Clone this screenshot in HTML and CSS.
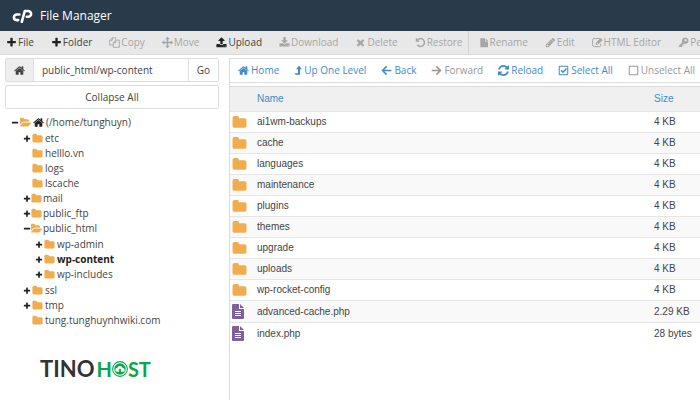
FILE: index.html
```html
<!DOCTYPE html>
<html lang="en">
<head>
<meta charset="UTF-8">
<meta name="viewport" content="width=device-width, initial-scale=1.0">
<title>File Manager</title>
<link rel="stylesheet" href="styles.css">
</head>
<body>
<!-- Icon set -->
<svg class="sprite" aria-hidden="true">
  <symbol id="plus" viewBox="0 0 1792 1792"><path d="M1600 736v192q0 40-28 68t-68 28h-416v416q0 40-28 68t-68 28h-192q-40 0-68-28t-28-68v-416h-416q-40 0-68-28t-28-68v-192q0-40 28-68t68-28h416v-416q0-40 28-68t68-28h192q40 0 68 28t28 68v416h416q40 0 68 28t28 68z"/></symbol>
  <symbol id="minus" viewBox="0 0 1792 1792"><path d="M1600 736v192q0 40-28 68t-68 28h-1216q-40 0-68-28t-28-68v-192q0-40 28-68t68-28h1216q40 0 68 28t28 68z"/></symbol>
  <symbol id="folder" viewBox="0 0 1792 1792"><path d="M1728 608v704q0 92-66 158t-158 66h-1216q-92 0-158-66t-66-158v-960q0-92 66-158t158-66h320q92 0 158 66t66 158v32h672q92 0 158 66t66 158z"/></symbol>
  <symbol id="folder-open" viewBox="0 0 1792 1792"><path d="M1815 952q0 31-31 66l-336 396q-43 51-120.5 86.5t-143.5 35.5h-1088q-34 0-60.5-13t-26.5-43q0-31 31-66l336-396q43-51 120.5-86.5t143.5-35.5h1088q34 0 60.5 13t26.5 43zm-343-344v160h-832q-94 0-197 47.5t-164 119.5l-337 396-5 6q0-4-.5-12.5t-.5-12.5v-960q0-92 66-158t158-66h320q92 0 158 66t66 158v32h544q92 0 158 66t66 158z"/></symbol>
  <symbol id="home" viewBox="64 64 1664 1664"><path d="M1472 992v480q0 26-19 45t-45 19h-384v-384h-256v384h-384q-26 0-45-19t-19-45v-480q0-1 .5-3t.5-3l575-474 575 474q1 2 1 6zm223-69l-62 74q-8 9-21 11h-3q-13 0-21-7l-692-577-692 577q-12 8-24 7-13-2-21-11l-62-74q-8-10-7-23.5t11-21.5l719-599q32-26 76-26t76 26l244 204v-195q0-14 9-23t23-9h192q14 0 23 9t9 23v408l219 182q10 8 11 21.5t-7 23.5z"/></symbol>
  <symbol id="copy" viewBox="0 0 16 16"><path fill="none" stroke="currentColor" stroke-width="1.3" stroke-linejoin="round" d="M9.5 3.8V1H4.8L1 4.8v6.7h5.2M4.8 1v3.8H1M10 4.5h5V15H6.2V8.2zM10 4.5v3.7H6.2"/></symbol>
  <symbol id="move" viewBox="0 0 1792 1792"><path d="M1792 896q0 26-19 45l-256 256q-19 19-45 19t-45-19-19-45v-128h-384v384h128q26 0 45 19t19 45-19 45l-256 256q-19 19-45 19t-45-19l-256-256q-19-19-19-45t19-45 45-19h128v-384h-384v128q0 26-19 45t-45 19-45-19l-256-256q-19-19-19-45t19-45l256-256q19-19 45-19t45 19 19 45v128h384v-384h-128q-26 0-45-19t-19-45 19-45l256-256q19-19 45-19t45 19l256 256q19 19 19 45t-19 45-45 19h-128v384h384v-128q0-26 19-45t45-19 45 19l256 256q19 19 19 45z"/></symbol>
  <symbol id="upload" viewBox="0 0 1792 1792"><path d="M1344 1472q0-26-19-45t-45-19-45 19-19 45 19 45 45 19 45-19 19-45zm256 0q0-26-19-45t-45-19-45 19-19 45 19 45 45 19 45-19 19-45zm128-224v320q0 40-28 68t-68 28h-1472q-40 0-68-28t-28-68v-320q0-40 28-68t68-28h427q21 56 70.5 92t110.5 36h256q61 0 110.5-36t70.5-92h427q40 0 68 28t28 68zm-325-648q-17 40-59 40h-256v448q0 26-19 45t-45 19h-256q-26 0-45-19t-19-45v-448h-256q-42 0-59-40-17-39 14-69l448-448q18-19 45-19t45 19l448 448q31 30 14 69z"/></symbol>
  <symbol id="download" viewBox="0 0 1792 1792"><path d="M1344 1344q0-26-19-45t-45-19-45 19-19 45 19 45 45 19 45-19 19-45zm256 0q0-26-19-45t-45-19-45 19-19 45 19 45 45 19 45-19 19-45zm128-224v320q0 40-28 68t-68 28h-1472q-40 0-68-28t-28-68v-320q0-40 28-68t68-28h465l135 136q58 56 136 56t136-56l136-136h464q40 0 68 28t28 68zm-325-569q17 41-14 70l-448 448q-18 19-45 19t-45-19l-448-448q-31-29-14-70 17-39 59-39h256v-448q0-26 19-45t45-19h256q26 0 45 19t19 45v448h256q42 0 59 39z"/></symbol>
  <symbol id="times" viewBox="0 0 1792 1792"><path d="M1490 1322q0 40-28 68l-136 136q-28 28-68 28t-68-28l-294-294-294 294q-28 28-68 28t-68-28l-136-136q-28-28-28-68t28-68l294-294-294-294q-28-28-28-68t28-68l136-136q28-28 68-28t68 28l294 294 294-294q28-28 68-28t68 28l136 136q28 28 28 68t-28 68l-294 294 294 294q28 28 28 68z"/></symbol>
  <symbol id="undo" viewBox="0 0 1792 1792"><path d="M1664 896q0 156-61 298t-164 245-245 164-298 61q-172 0-327-72.5t-264-204.5q-7-10-6.5-22.5t8.5-20.5l137-138q10-9 25-9 16 2 23 12 73 95 179 147t225 52q104 0 198.5-40.5t163.5-109.5 109.5-163.5 40.5-198.5-40.5-198.5-109.5-163.5-163.5-109.5-198.5-40.5q-98 0-188 35.5t-160 101.5l137 138q31 30 14 69-17 40-59 40h-448q-26 0-45-19t-19-45v-448q0-42 40-59 39-17 69 14l130 129q107-101 244.5-156.5t284.5-55.5q156 0 298 61t245 164 164 245 61 298z"/></symbol>
  <symbol id="file" viewBox="0 -128 1600 1920"><path d="M1152 512v-472q22 14 36 28l408 408q14 14 28 36h-472zm-128 32q0 40 28 68t68 28h480v1056q0 40-28 68t-68 28h-1344q-40 0-68-28t-28-68v-1600q0-40 28-68t68-28h864v544z"/></symbol>
  <symbol id="pencil" viewBox="0 0 1792 1792"><path d="M491 1536l91-91-235-235-91 91v107h128v128h107zm523-928q0-22-22-22-10 0-17 7l-542 542q-7 7-7 17 0 22 22 22 10 0 17-7l542-542q7-7 7-17zm-54-192l416 416-832 832h-416v-416zm683 96q0 53-37 90l-166 166-416-416 166-165q36-38 90-38 53 0 91 38l235 234q37 39 37 91z"/></symbol>
  <symbol id="edit" viewBox="0 0 16 16"><path fill="none" stroke="currentColor" stroke-width="1.4" d="M11.5 2.2H3Q1 2.2 1 4.2v7.6Q1 14 3 14h7.8q2 0 2-2V9.8"/><path d="M5.6 11.2V8.3l7-7 2.9 2.9-7 7zM7 8.8v1h1.2v.7l.8-.8L7.7 8.2z" fill-rule="evenodd"/></symbol>
  <symbol id="key" viewBox="0 0 16 16"><path fill-rule="evenodd" d="M10.4.8a4.6 4.6 0 1 1-2 8.6L7 10.8l1.3 1.3-1.1 1.1-1.3-1.3-.7.7 1.2 1.2-1.2 1.2-1.1-1.3L2.6 15 .8 13.2l5.5-5.7A4.6 4.6 0 0 1 10.4.8zM11 2.9a1.7 1.7 0 1 0 .1 0z"/></symbol>
  <symbol id="level-up" viewBox="1 0 12 16"><path d="M8.5 1 13 6H10V14.5H3.5L1.500 12H7V6H4z"/></symbol>
  <symbol id="arrow-left" viewBox="0 0 16 16"><path fill="none" stroke="currentColor" stroke-width="2.2" d="M15 8H2.5M8.2 2 2.2 8l6 6"/></symbol>
  <symbol id="arrow-right" viewBox="0 0 16 16"><path fill="none" stroke="currentColor" stroke-width="2.2" d="M1 8h12.500M7.800 2l6 6-6 6"/></symbol>
  <symbol id="refresh" viewBox="128 128 1536 1536"><path d="M1639 1056q0 5-1 7-64 268-268 434.500t-478 166.500q-146 0-282.500-55t-243.500-157l-129 129q-19 19-45 19t-45-19-19-45v-448q0-26 19-45t45-19h448q26 0 45 19t19 45-19 45l-137 137q71 66 161 102t187 36q134 0 250-65t186-179q11-17 53-117 8-23 30-23h192q13 0 22.500 9.500t9.500 22.500zm25-800v448q0 26-19 45t-45 19h-448q-26 0-45-19t-19-45 19-45l138-138q-148-137-349-137-134 0-250 65t-186 179q-11 17-53 117-8 23-30 23h-199q-13 0-22.500-9.500t-9.500-22.500v-7q65-268 270-434.500t480-166.500q146 0 284 55.500t245 156.500l130-129q19-19 45-19t45 19 19 45z"/></symbol>
  <symbol id="check" viewBox="0 0 16 16"><rect x="1.8" y="1.8" width="12.4" height="12.4" rx="1" fill="none" stroke="currentColor" stroke-width="1.5"/><path fill="none" stroke="currentColor" stroke-width="2" d="m4.3 7.5 3 3 5-5.5"/></symbol>
  <symbol id="square" viewBox="0 0 16 16"><rect x="1.8" y="1.8" width="12.4" height="12.4" rx="1" fill="none" stroke="currentColor" stroke-width="1.5"/></symbol>
  <symbol id="doc" viewBox="0 0 12 15"><path fill="#7f609c" d="M1 0h6v5h5v9q0 1-1 1H1q-1 0-1-1V1q0-1 1-1zM8 0l4 4H8z"/><path fill="#fff" d="M3 7h6v1H3zM3 9h6v1H3zM3 11h6v1H3z"/></symbol>
</svg>

<header class="header">
  <svg class="cp-logo" viewBox="0 0 21 14" aria-hidden="true">
    <path d="M7.400 5.500H4.700a2.800 2.800 0 0 0 0 5.600h1.500M9.800 12.900l3-10.900h3.400a2.900 2.900 0 0 1 0 5.800h-1.400"/>
  </svg>
  <h1 class="title">File Manager</h1>
</header>

<div class="toolbar">
  <button class="tool"><svg class="icon"><use href="#plus"/></svg>File</button>
  <button class="tool"><svg class="icon"><use href="#plus"/></svg>Folder</button>
  <button class="tool" disabled><svg class="icon"><use href="#copy"/></svg>Copy</button>
  <button class="tool" disabled><svg class="icon"><use href="#move"/></svg>Move</button>
  <button class="tool"><svg class="icon"><use href="#upload"/></svg>Upload</button>
  <button class="tool" disabled><svg class="icon"><use href="#download"/></svg>Download</button>
  <button class="tool" disabled><svg class="icon"><use href="#times"/></svg>Delete</button>
  <button class="tool" disabled><svg class="icon"><use href="#undo"/></svg>Restore</button>
  <span class="divider"></span>
  <button class="tool" disabled><svg class="icon narrow"><use href="#file"/></svg>Rename</button>
  <button class="tool" disabled><svg class="icon"><use href="#pencil"/></svg>Edit</button>
  <button class="tool" disabled><svg class="icon"><use href="#edit"/></svg>HTML Editor</button>
  <button class="tool" disabled><svg class="icon"><use href="#key"/></svg>Permissions</button>
</div>

<div class="main">
  <aside class="sidebar">
    <form class="location">
      <button class="addon" type="button" aria-label="Home"><svg class="icon"><use href="#home"/></svg></button>
      <input class="path" type="text" aria-label="Path" value="public_html/wp-content">
      <button class="go" type="button">Go</button>
    </form>
    <button class="collapse">Collapse All</button>

    <ul class="tree">
      <li>
        <div class="node"><svg class="toggle"><use href="#minus"/></svg><svg class="icon gold"><use href="#folder-open"/></svg><svg class="icon"><use href="#home"/></svg>(/home/tunghuyn)</div>
        <ul>
          <li class="node"><svg class="toggle"><use href="#plus"/></svg><svg class="icon gold"><use href="#folder"/></svg>etc</li>
          <li class="node"><span class="toggle"></span><svg class="icon gold"><use href="#folder"/></svg>helllo.vn</li>
          <li class="node"><span class="toggle"></span><svg class="icon gold"><use href="#folder"/></svg>logs</li>
          <li class="node"><span class="toggle"></span><svg class="icon gold"><use href="#folder"/></svg>lscache</li>
          <li class="node tight"><svg class="toggle"><use href="#plus"/></svg><svg class="icon gold"><use href="#folder"/></svg>mail</li>
          <li class="node tight"><svg class="toggle"><use href="#plus"/></svg><svg class="icon gold"><use href="#folder"/></svg>public_ftp</li>
          <li>
            <div class="node tight"><svg class="toggle"><use href="#minus"/></svg><svg class="icon gold"><use href="#folder-open"/></svg>public_html</div>
            <ul>
              <li class="node"><svg class="toggle"><use href="#plus"/></svg><svg class="icon gold"><use href="#folder"/></svg>wp-admin</li>
              <li class="node current"><svg class="toggle"><use href="#plus"/></svg><svg class="icon gold"><use href="#folder"/></svg>wp-content</li>
              <li class="node"><svg class="toggle"><use href="#plus"/></svg><svg class="icon gold"><use href="#folder"/></svg>wp-includes</li>
            </ul>
          </li>
          <li class="node"><svg class="toggle"><use href="#plus"/></svg><svg class="icon gold"><use href="#folder"/></svg>ssl</li>
          <li class="node"><svg class="toggle"><use href="#plus"/></svg><svg class="icon gold"><use href="#folder"/></svg>tmp</li>
          <li class="node"><span class="toggle"></span><svg class="icon gold"><use href="#folder"/></svg>tung.tunghuynhwiki.com</li>
        </ul>
      </li>
    </ul>

    <div class="brand">
      <span class="brand-dark">TINO</span>
      <span class="brand-green">H<svg class="brand-o" viewBox="0 0 18 18" aria-hidden="true"><circle cx="9" cy="9" r="8.300" fill="none" stroke="#0aa64b" stroke-width="1.200"/><circle cx="9" cy="9" r="6.500" fill="#0aa64b"/><path fill="#fff" d="M5.500 12a2 2 0 0 1 .3-4 3.300 3.300 0 0 1 6.300 0 2 2 0 0 1 .4 4H10v-1.500h1L9 8.500l-2 2h1V12z"/></svg>ST</span>
    </div>
  </aside>

  <section class="content">
    <nav class="navbar">
      <button class="nav"><svg class="icon"><use href="#home"/></svg>Home</button>
      <button class="nav"><svg class="icon narrow"><use href="#level-up"/></svg>Up One Level</button>
      <button class="nav"><svg class="icon"><use href="#arrow-left"/></svg>Back</button>
      <button class="nav" disabled><svg class="icon"><use href="#arrow-right"/></svg>Forward</button>
      <button class="nav"><svg class="icon"><use href="#refresh"/></svg>Reload</button>
      <button class="nav"><svg class="icon"><use href="#check"/></svg>Select All</button>
      <button class="nav" disabled><svg class="icon"><use href="#square"/></svg>Unselect All</button>
    </nav>

    <table class="files">
      <thead>
        <tr><th class="type"></th><th>Name</th><th class="size">Size</th></tr>
      </thead>
      <tbody>
        <tr><td><svg class="folder"><use href="#folder"/></svg></td><td>ai1wm-backups</td><td>4 KB</td></tr>
        <tr><td><svg class="folder"><use href="#folder"/></svg></td><td>cache</td><td>4 KB</td></tr>
        <tr><td><svg class="folder"><use href="#folder"/></svg></td><td>languages</td><td>4 KB</td></tr>
        <tr><td><svg class="folder"><use href="#folder"/></svg></td><td>maintenance</td><td>4 KB</td></tr>
        <tr><td><svg class="folder"><use href="#folder"/></svg></td><td>plugins</td><td>4 KB</td></tr>
        <tr><td><svg class="folder"><use href="#folder"/></svg></td><td>themes</td><td>4 KB</td></tr>
        <tr><td><svg class="folder"><use href="#folder"/></svg></td><td>upgrade</td><td>4 KB</td></tr>
        <tr><td><svg class="folder"><use href="#folder"/></svg></td><td>uploads</td><td>4 KB</td></tr>
        <tr><td><svg class="folder"><use href="#folder"/></svg></td><td>wp-rocket-config</td><td>4 KB</td></tr>
        <tr class="file"><td><svg class="doc"><use href="#doc"/></svg></td><td>advanced-cache.php</td><td>2.29 KB</td></tr>
        <tr class="file"><td><svg class="doc"><use href="#doc"/></svg></td><td>index.php</td><td>28 bytes</td></tr>
      </tbody>
    </table>
  </section>
</div>
</body>
</html>
```
FILE: styles.css
```css
:root {
  --navy: #293a4a;
  --blue: #428bca;
  --gold: #f0ad4e;
  --line: #ddd;
  --text: #444;
  --muted: #a6a6a6;
}

* {
  box-sizing: border-box;
}

body {
  margin: 0;
  min-height: 100vh;
  display: flex;
  flex-direction: column;
  background: #fff;
  color: var(--text);
  font: 10px/15px "Open Sans", sans-serif;
}

button,
input {
  margin: 0;
  padding: 0;
  border: 0;
  background: none;
  color: inherit;
  font: inherit;
}

button {
  white-space: nowrap;
}

svg {
  fill: currentColor;
}

.sprite {
  display: none;
}

.icon {
  width: 11px;
  height: 11px;
  flex: none;
}

.icon.narrow {
  width: 8px;
}

/* Header */
.header {
  display: flex;
  align-items: center;
  gap: 7px;
  height: 31px;
  padding: 0 12px;
  background: var(--navy);
  color: #fff;
}

.cp-logo {
  width: 21px;
  height: 14px;
  fill: none;
  stroke: #fff;
  stroke-width: 2.6;
  stroke-linecap: round;
  stroke-linejoin: round;
}

.title {
  margin: 0;
  font-size: 12px;
  font-weight: 400;
}

/* Toolbar */
.toolbar {
  display: flex;
  align-items: center;
  gap: 17px;
  height: 24px;
  padding: 0 6px;
  overflow: hidden;
  background: #e8e8e8;
  border-bottom: 1px solid var(--line);
}

.tool,
.nav {
  display: flex;
  align-items: center;
  gap: 2px;
  flex: none;
}

.tool {
  gap: 1px;
}

.tool .icon {
  color: #222;
}

.tool:disabled,
.tool:disabled .icon {
  color: var(--muted);
}

.divider {
  align-self: stretch;
  flex: none;
  width: 1px;
  margin: 0 -6px 0 -11px;
  background: #d2d2d2;
}

/* Sidebar */
.main {
  display: flex;
  flex: 1;
  gap: 10px;
  padding: 3px 0 0 5px;
}

.sidebar {
  flex: 0 0 214px;
}

.location {
  display: flex;
  height: 24px;
  margin-bottom: 3px;
  border: 1px solid var(--line);
  border-radius: 2px;
}

.addon {
  display: flex;
  align-items: center;
  justify-content: center;
  width: 28px;
  background: #eee;
  border-right: 1px solid var(--line);
}

.path {
  flex: 1;
  min-width: 0;
  padding: 0 8px;
}

.go {
  width: 30px;
  border-left: 1px solid var(--line);
}

.collapse {
  display: block;
  width: 100%;
  height: 24px;
  border: 1px solid var(--line);
  border-radius: 2px;
}

.tree {
  margin: 6px 0 0;
  padding: 0 0 0 6px;
  list-style: none;
}

.tree ul {
  margin: 1px 0;
  padding: 0 0 0 12px;
  list-style: none;
}

.node {
  display: flex;
  align-items: center;
  gap: 2px;
  height: 15px;
}

.node.tight {
  gap: 1px;
}

.toggle {
  width: 8px;
  height: 8px;
  margin-right: -1px;
  color: #222;
}

.node .icon {
  color: #222;
}

.node .gold {
  color: var(--gold);
}

.current {
  color: #222;
  font-weight: 700;
}

.brand {
  display: flex;
  gap: 2px;
  margin: 29px 0 0 35px;
  font: 700 22px/24px Lato, sans-serif;
}

.brand-dark {
  color: #333;
}

.brand-green {
  display: flex;
  align-items: center;
  color: #0aa64b;
  font-size: 20px;
}

.brand-o {
  width: 16px;
  height: 16px;
}

/* File list */
.content {
  flex: 1;
  min-width: 0;
  border-left: 1px solid var(--line);
}

.navbar {
  display: flex;
  align-items: center;
  gap: 15px;
  height: 25px;
  margin-bottom: 3px;
  padding: 0 8px;
  border-top: 1px solid var(--line);
  border-bottom: 1px solid var(--line);
  color: var(--blue);
}

.nav:disabled {
  color: #999;
}

.files {
  width: 100%;
  border-collapse: collapse;
  border-top: 1px solid var(--line);
  font: 10px/14px "Liberation Sans", Arial, sans-serif;
}

.files th {
  height: 25px;
  padding: 0;
  background: #f0f0f0;
  color: var(--blue);
  font-weight: 400;
  text-align: left;
}

.files td {
  height: 21px;
  padding: 0;
  border-top: 1px solid #e6e6e6;
}

.files .file td {
  height: 22px;
}

.files tbody tr:nth-child(even) {
  background: #f9f9f9;
}

.files .type {
  width: 27px;
}

.files .size {
  width: 46px;
}

.folder,
.doc {
  display: block;
  height: 15px;
  margin-left: 2px;
}

.folder {
  width: 15px;
  color: var(--gold);
}

.doc {
  width: 12px;
}
```
